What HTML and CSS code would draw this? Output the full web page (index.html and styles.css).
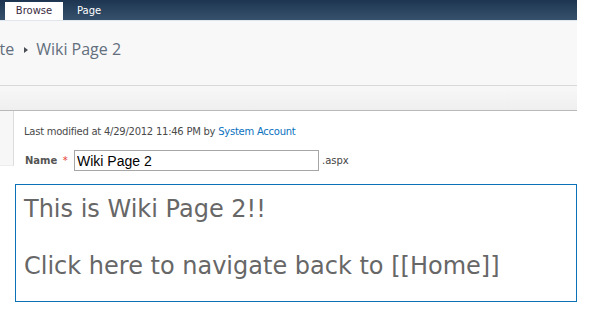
FILE: index.html
```html
<!DOCTYPE html>
<html>
    <head>
        <meta charset="UTF-8">
        <link rel="stylesheet" href="styles.css">
    </head>
    <body>
        <div class="ribbon">
            <span class="tab active">Browse</span>
            <span class="tab">Page</span>
        </div>
        <div class="titleArea">
            <div class="breadcrumb">
                <span class="crumbSite">Team Site</span>
                <span class="crumbArrow"></span>
                <span class="crumbPage">Wiki Page 2</span>
            </div>
        </div>
        <div class="subBar"></div>
        <div class="body">
            <div class="leftNav"></div>
            <div class="main">
                <div class="modified">Last modified at 4/29/2012 11:46 PM by <a href="#" class="user">System Account</a></div>
                <div class="nameRow">
                    <span class="nameLabel">Name <span class="req">*</span></span>
                    <input type="text" class="nameInput" value="Wiki Page 2">
                    <span class="ext">.aspx</span>
                </div>
            </div>
        </div>
        <div class="editor">
            <p>This is Wiki Page 2!!</p>
            <p>Click here to navigate back to [[Home]]</p>
        </div>
    </body>
</html>
```

FILE: styles.css
```css
html {
    width: 100%;
    height: 100%;
}

body {
    margin: 0;
    background: #ffffff;
    font-family: "DejaVu Sans", Verdana, sans-serif;
    overflow: hidden;
}

.ribbon {
    width: 577px;
    height: 21px;
    background-image: linear-gradient(to bottom, #1d3550, #37526d);
    border-bottom: 1px solid #dfe6ee;
    box-sizing: border-box;
    display: flex;
    align-items: flex-end;
    padding-left: 5px;
}

.tab {
    font-family: "DejaVu Sans", sans-serif;
    font-size: 10px;
    color: #ffffff;
    height: 18px;
    line-height: 17px;
    padding: 0 10px;
    box-sizing: border-box;
}

.tab.active {
    background: #ffffff;
    color: #3a2b3e;
    width: 58px;
    text-align: center;
    margin-right: 4px;
}

.titleArea {
    width: 577px;
    height: 64px;
    background: #f8f8f8;
    border-bottom: 1px solid #d9d9d9;
    overflow: hidden;
}

.breadcrumb {
    display: flex;
    align-items: center;
    margin-left: -59px;
    padding-top: 17px;
    font-family: "Open Sans", sans-serif;
    font-size: 16px;
    color: #636f7e;
    white-space: nowrap;
}

.crumbArrow {
    width: 0;
    height: 0;
    border-top: 3px solid transparent;
    border-bottom: 3px solid transparent;
    border-left: 4px solid #4a4f56;
    margin: 2px 8px 0 10px;
}

.subBar {
    width: 577px;
    height: 24px;
    background-image: linear-gradient(to bottom, #f8f8f8, #efefef);
    border-bottom: 1px solid #b9b9b9;
}

.body {
    display: flex;
}

.leftNav {
    width: 13px;
    height: 54px;
    background: #f7f7f7;
    border-right: 1px solid #dcdcdc;
    border-bottom: 1px solid #ececec;
}

.main {
    padding: 15px 0 0 10px;
    font-size: 10px;
    color: #4a4a4a;
}

.modified {
    font-family: "DejaVu Sans", sans-serif;
    font-size: 10px;
    letter-spacing: -0.25px;
}

.user {
    color: #0a72c0;
    text-decoration: none;
}

.nameRow {
    display: flex;
    align-items: center;
    margin-top: 13px;
}

.nameLabel {
    font-weight: bold;
    color: #555555;
    width: 49px;
    padding-left: 1px;
}

.req {
    color: #e33a2c;
    font-weight: normal;
    margin-left: 2px;
}

.nameInput {
    width: 245px;
    height: 21px;
    box-sizing: border-box;
    border: 1px solid #a6a6a6;
    font-family: "Liberation Sans", Arial, sans-serif;
    font-size: 14px;
    color: #000000;
    padding: 0 2px;
    margin: 0 3px 0 0;
}

.ext {
    font-family: "DejaVu Sans", sans-serif;
    font-size: 10px;
    color: #444444;
}

.editor {
    margin: 13px 0 0 15px;
    width: 562px;
    height: 118px;
    box-sizing: border-box;
    border: 1px solid #0a72b5;
    padding: 10px 0 0 8px;
    font-family: "DejaVu Sans", Verdana, sans-serif;
    font-size: 24px;
    color: #676767;
}

.editor p {
    margin: 0 0 29px 0;
    line-height: 28px;
}
```
